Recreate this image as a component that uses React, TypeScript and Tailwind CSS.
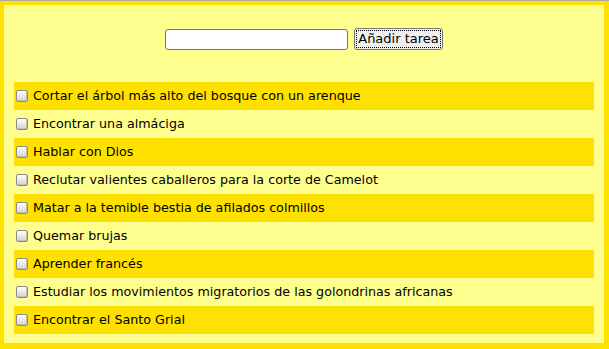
import React from "react";

const tasks = [
  "Cortar el árbol más alto del bosque con un arenque",
  "Encontrar una almáciga",
  "Hablar con Dios",
  "Reclutar valientes caballeros para la corte de Camelot",
  "Matar a la temible bestia de afilados colmillos",
  "Quemar brujas",
  "Aprender francés",
  "Estudiar los movimientos migratorios de las golondrinas africanas",
  "Encontrar el Santo Grial",
];

export default function App() {
  return (
    <div
      className="h-[349px] bg-[#ffe100] border-t border-[#a8a8a8] pt-[4px] pl-[4px] pr-[5px] pb-[6px] text-[12.7px] text-black"
      style={{ fontFamily: '"DejaVu Sans", Verdana, sans-serif' }}
    >
      <div className="h-full bg-[#ffff8f] px-[10px]">
        <div className="flex justify-center items-center gap-[6px] pt-[23px]">
          <input
            type="text"
            className="w-[183px] h-[21px] bg-white border border-[#767676] rounded-[3px] outline-none"
          />
          <button className="h-[22px] w-[89px] bg-[#efefef] border border-[#767676] rounded-[3px] flex items-center justify-center p-[1px]">
            <span className="border border-dotted border-black px-[1px] leading-[16px] text-[13px]">
              Añadir tarea
            </span>
          </button>
        </div>
        <ul className="mt-[32px]">
          {tasks.map((t, i) => (
            <li
              key={i}
              className={`h-[28px] flex items-center pl-[2px] gap-[5px] ${
                i % 2 === 0 ? "bg-[#ffe100]" : ""
              }`}
            >
              <span className="w-[12px] h-[12px] shrink-0 border border-[#8a8a8a] rounded-[2px] bg-gradient-to-b from-white to-[#d4d4d4] shadow-[inset_-1px_-1px_0_#c0c0c0]" />
              <span>{t}</span>
            </li>
          ))}
        </ul>
      </div>
    </div>
  );
}
